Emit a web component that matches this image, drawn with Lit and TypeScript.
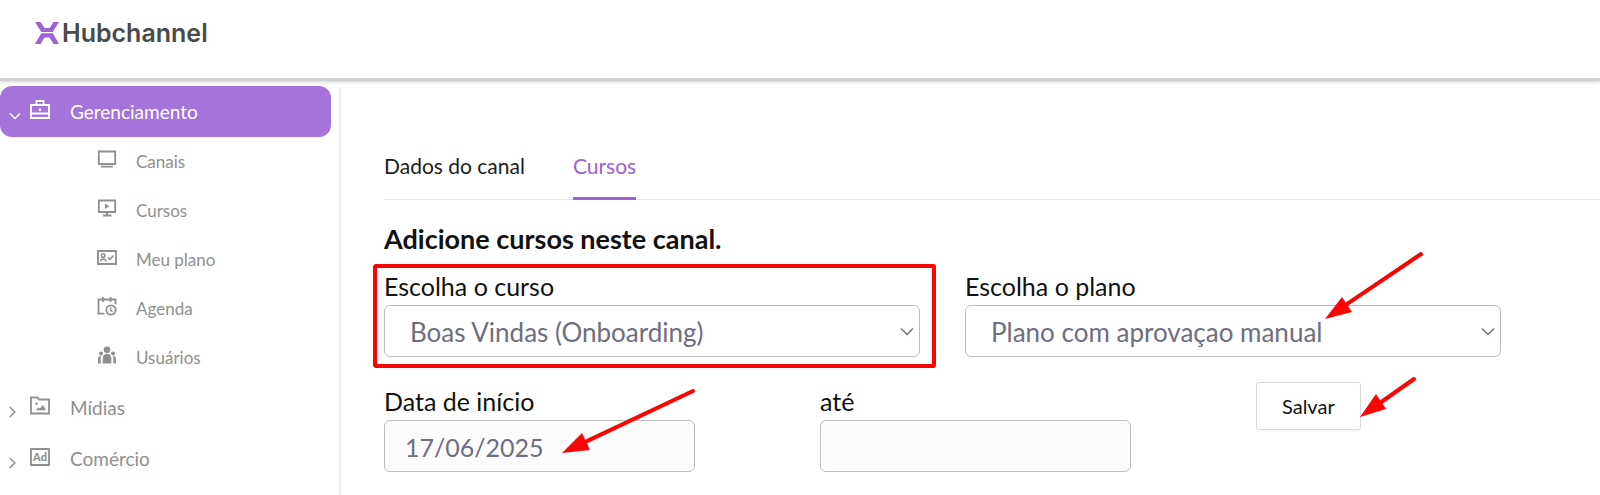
import { LitElement, html, css, svg, nothing } from "lit";
import { customElement, property, state } from "lit/decorators.js";
import { classMap } from "lit/directives/class-map.js";

const icons: Record<string, unknown> = {
  briefcase: svg`<path d="M1 6h18v13H1zM6.500 6V2h7v4M1 14.500h18"/><path d="M10 9.500v2.500"/>`,
  screen: svg`<path d="M1.800 2.500h16.400v12.500H1.800zM4 17.700h12"/>`,
  course: svg`<path d="M1.800 2.500h16.400v11.500H1.800zM10 14v3.500M6 17.500h8.500"/><path class="solid" d="M8 5.500l4.500 2.700L8 11z"/>`,
  plan: svg`<path d="M1 4h18v13H1z"/><g class="thin"><circle cx="6.200" cy="8.500" r="1.800"/><path d="M3.500 14.300c.4-1.600 1.300-2.300 2.700-2.300s2.300.7 2.700 2.300M11 10.300l2 2 3.500-3.800"/></g>`,
  agenda: svg`<path d="M7.500 17.700H1.500V3.500h17v4.700M6 1v5M13.500 1v5"/><circle cx="14" cy="14" r="4.700"/><path class="thin" d="M13.700 11.500V14l1.800 1.800"/>`,
  users: svg`<g class="solid"><circle cx="10" cy="4.700" r="3.300"/><circle cx="4" cy="8.500" r="2"/><circle cx="16" cy="8.500" r="2"/><path d="M5.700 18.500V13a4.300 4.300 0 0 1 8.600 0v5.500zM1 18.500V14c0-1.800 1-3 3.200-3-.4.900-.5 1.700-.5 2.600v4.900zM19 18.500V14c0-1.800-1-3-3.200-3 .4.900.5 1.700.5 2.600v4.900z"/></g>`,
  media: svg`<path d="M1 18.500v-16h6.500l1.500 2h10v14z"/><circle class="solid" cx="6.500" cy="8.800" r="1.200"/><path class="solid" d="M5.500 15.200l3-2.800 1.500 1.200 3-3.500 3 5.100z"/>`,
  ad: svg`<path d="M1 3h18v16H1z"/><text class="glyph" x="10" y="14.500" text-anchor="middle">Ad</text>`,
};

@customElement("hub-icon")
class HubIcon extends LitElement {
  @property() name = "";
  static styles = css`
    :host { display: block; flex: none; width: 20px; height: 20px; }
    .svg { display: block; width: 20px; height: 20px; fill: none; stroke: currentColor; stroke-width: 1.800; }
    .thin { stroke-width: 1.500; }
    .solid { fill: currentColor; stroke: none; }
    .glyph { fill: currentColor; stroke: none; font: 900 11px Lato, sans-serif; }
  `;
  render() {
    return html`<svg class="svg" viewBox="0 0 20 20" aria-hidden="true">${icons[this.name]}</svg>`;
  }
}

interface Item { label: string; icon: string; }
interface Group extends Item { children: Item[]; }

const groups: Group[] = [
  {
    label: "Gerenciamento", icon: "briefcase",
    children: [
      { label: "Canais", icon: "screen" },
      { label: "Cursos", icon: "course" },
      { label: "Meu plano", icon: "plan" },
      { label: "Agenda", icon: "agenda" },
      { label: "Usuários", icon: "users" },
    ],
  },
  { label: "Mídias", icon: "media", children: [] },
  { label: "Comércio", icon: "ad", children: [] },
];

@customElement("hub-sidebar")
class HubSidebar extends LitElement {
  @state() private open = "Gerenciamento";
  static styles = css`
    :host { display: block; }
    .list { list-style: none; margin: 0; padding: 0; }
    .group {
      display: flex; align-items: center; width: 100%; height: 51px; padding: 1px 0 0 9px; gap: 9px;
      box-sizing: border-box; border: 0; border-radius: 12px; background: none; color: #8f8f8f;
      font: 19px/24px Lato, sans-serif; text-align: left; cursor: pointer;
    }
    .group.open { background: #a573d9; color: #fff; }
    .chevron { flex: none; width: 12px; height: 12px; margin-top: 8px; fill: none; stroke: currentColor; stroke-width: 1.500; }
    .icon { margin-bottom: 7px; }
    .text { padding-left: 11px; }
    .link {
      display: flex; align-items: center; box-sizing: border-box; height: 49px; padding: 1px 0 0 97px; gap: 19px;
      color: #8f8f8f; font: 17px/24px Lato, sans-serif; text-decoration: none;
    }
  `;
  render() {
    return html`<nav aria-label="Principal"><ul class="list">${groups.map((g) => {
      const open = g.label === this.open;
      return html`<li>
        <button type="button" class=${classMap({ group: true, open })} aria-expanded=${open}
          @click=${() => (this.open = open ? "" : g.label)}>
          <svg class="chevron" viewBox="0 0 12 12" aria-hidden="true"><path d=${open ? "M1 3.500l5 5 5-5" : "M.8 1l5 5-5 5"}></path></svg>
          <hub-icon class="icon" name=${g.icon}></hub-icon>
          <span class="text">${g.label}</span>
        </button>
        ${open && g.children.length
          ? html`<ul class="list">${g.children.map((c) => html`<li><a class="link" href="#">
              <hub-icon class="icon" name=${c.icon}></hub-icon><span>${c.label}</span></a></li>`)}</ul>`
          : nothing}
      </li>`;
    })}</ul></nav>`;
  }
}

@customElement("app-root")
class AppRoot extends LitElement {
  static styles = css`
    :host { display: block; min-height: 100vh; overflow: hidden; background: #fff; color: #111; font-family: Lato, sans-serif; }
    .header {
      display: flex; align-items: center; height: 66px; padding: 0 35px 12px; gap: 3px;
      border-bottom: 3px solid #d0d0d0; box-shadow: 0 1px 3px #00000030; position: relative;
    }
    .mark { display: block; width: 24px; height: 22px; fill: #9b63d3; }
    .brand { font: 600 25px/32px Inter, sans-serif; color: #4a4a4a; }
    .body { display: grid; grid-template-columns: 339px 1fr; padding-top: 5px; }
    .side { padding-right: 8px; }
    .main { min-height: 407px; box-sizing: border-box; border-left: 2px solid #ececec; padding: 64px 0 23px 43px; margin-top: 2px; }
    .tabs { display: flex; gap: 48px; border-bottom: 1px solid #e8e8e8; }
    .tab {
      padding: 0 0 17px; margin-bottom: -1px; border: 0; border-bottom: 3px solid transparent; background: none;
      color: #1c1c1c; font: 21px/28px Lato, sans-serif; cursor: pointer;
    }
    .tab.on { color: #9b63d3; border-color: #9b63d3; }
    .title { margin: 21px 0 10px; font: 700 27px/36px Lato, sans-serif; }
    .row { display: grid; }
    .courses { grid-template-columns: 1fr 1fr; gap: 45px; padding-right: 99px; }
    .dates { grid-template-columns: 311fr 311fr 344fr; gap: 125px; margin-top: 25px; }
    .field { position: relative; }
    .label { display: block; font-size: 25px; line-height: 38px; }
    .control {
      display: block; box-sizing: border-box; width: 100%; height: 52px; margin: 0; padding: 2px 25px 0;
      border: 1px solid #bdbdbd; border-radius: 6px; background: #fff; color: #6e6e80;
      font: 26px/36px Lato, sans-serif; appearance: none;
    }
    .date { padding: 2px 20px 0; background: #fcfcfc; font-size: 25px; }
    .picker { position: relative; }
    .caret {
      position: absolute; right: 6px; top: 20px; width: 14px; height: 14px;
      fill: none; stroke: #6e6e80; stroke-width: 1.500; pointer-events: none;
    }
    .action { position: relative; justify-self: start; align-self: start; }
    .save {
      display: block; height: 48px; padding: 0 25px; border: 1px solid #d9d9d9; border-radius: 3px; background: #fff;
      box-shadow: 0 2px 1px #00000008; color: #111; font: 20px/24px Lato, sans-serif; cursor: pointer;
    }
    .highlight { position: absolute; inset: -3px -16px -11px -11px; border: 4px solid #fb0404; border-radius: 3px; pointer-events: none; }
    .arrow { position: absolute; fill: #fb0404; stroke: #fb0404; stroke-linecap: round; pointer-events: none; overflow: visible; }
    .shaft { stroke-width: 4; }
    .head { stroke: none; }
    .to-plan { right: 80px; top: -13px; }
    .to-date { right: 2px; top: 9px; }
    .to-save { left: calc(100% - 1px); top: -3px; }
  `;

  @state() private tab = "Cursos";

  private arrow(name: string, w: number, h: number, head: string) {
    return html`<svg class="arrow ${name}" width=${w} height=${h} viewBox="0 0 ${w} ${h}" aria-hidden="true">
      <path class="shaft" d="M${w} 0L16 ${h - (16 * h) / w}"></path><path class="head" d=${head}></path></svg>`;
  }

  private select(id: string, label: string, value: string) {
    return html`<label class="label" for=${id}>${label}</label>
      <div class="picker">
        <select class="control" id=${id}><option>${value}</option></select>
        <svg class="caret" viewBox="0 0 14 14" aria-hidden="true"><path d="M1 3.500l6 6 6-6"></path></svg>
      </div>`;
  }

  render() {
    return html`
      <header class="header">
        <svg class="mark" viewBox="0 0 24 22" aria-hidden="true">
          <path d="M0 0h5.500l4 6h5l4-6H24l-6.300 10H6.300z"></path>
          <path d="M0 22h5.500l4-6.500h5l4 6.500H24l-6.300-10.800H6.300z"></path>
        </svg>
        <span class="brand">Hubchannel</span>
      </header>
      <div class="body">
        <hub-sidebar class="side"></hub-sidebar>
        <main class="main">
          <div class="tabs" role="tablist">
            ${["Dados do canal", "Cursos"].map((t) => html`<button type="button" role="tab"
              aria-selected=${t === this.tab} class=${classMap({ tab: true, on: t === this.tab })}
              @click=${() => (this.tab = t)}>${t}</button>`)}
          </div>
          <h1 class="title">Adicione cursos neste canal.</h1>
          <div class="row courses">
            <div class="field">
              ${this.select("course", "Escolha o curso", "Boas Vindas (Onboarding)")}
              <div class="highlight"></div>
            </div>
            <div class="field">
              ${this.select("plan", "Escolha o plano", "Plano com aprovaçao manual")}
              ${this.arrow("to-plan", 96, 65, "M0 65L17 43L27 58z")}
            </div>
          </div>
          <div class="row dates">
            <div class="field">
              <label class="label" for="start">Data de início</label>
              <input class="control date" id="start" type="text" value="17/06/2025" />
              ${this.arrow("to-date", 131, 62, "M0 62L20 42L28 59z")}
            </div>
            <div class="field">
              <label class="label" for="end">até</label>
              <input class="control date" id="end" type="text" />
            </div>
            <div class="action">
              <button type="button" class="save">Salvar</button>
              ${this.arrow("to-save", 54, 38, "M0 38L16 15L26 30z")}
            </div>
          </div>
        </main>
      </div>`;
  }
}
